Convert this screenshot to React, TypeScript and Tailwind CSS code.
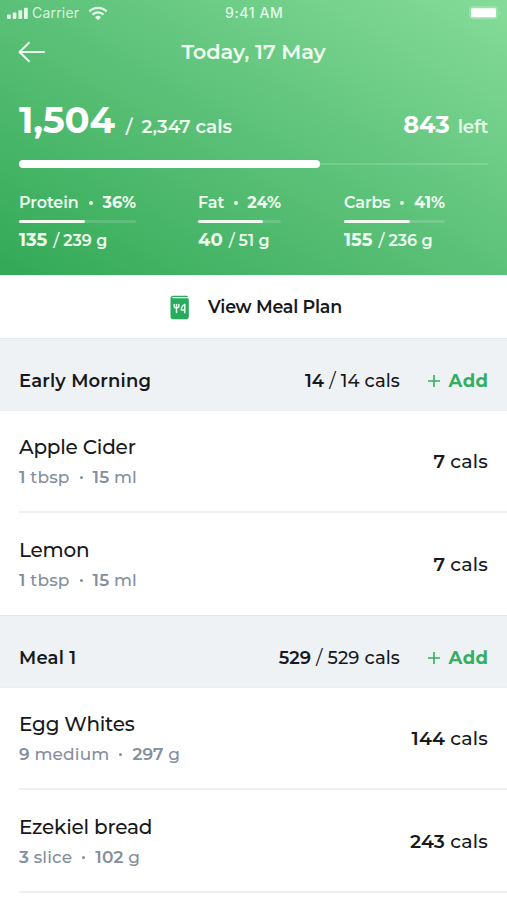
import React from "react";

type Macro = {
  name: string;
  percent: string;
  eaten: string;
  goal: string;
  box: string;
  fill: string;
};

const macros: Macro[] = [
  { name: "Protein", percent: "36%", eaten: "135", goal: "239 g", box: "w-[117px] mr-[62px]", fill: "w-[66px]" },
  { name: "Fat", percent: "24%", eaten: "40", goal: "51 g", box: "w-[83px] mr-[63px]", fill: "w-[65px]" },
  { name: "Carbs", percent: "41%", eaten: "155", goal: "236 g", box: "w-[101px]", fill: "w-[66px]" },
];

type Food = { name: string; qty: string; unit: string; weight: string; weightUnit: string; cals: string };

const morning: Food[] = [
  { name: "Apple Cider", qty: "1", unit: "tbsp", weight: "15", weightUnit: "ml", cals: "7" },
  { name: "Lemon", qty: "1", unit: "tbsp", weight: "15", weightUnit: "ml", cals: "7" },
];
const mealOne: Food[] = [
  { name: "Egg Whites", qty: "9", unit: "medium", weight: "297", weightUnit: "g", cals: "144" },
  { name: "Ezekiel bread", qty: "3", unit: "slice", weight: "102", weightUnit: "g", cals: "243" },
];

function StatusBar() {
  return (
    <div className="relative flex h-[26px] items-center justify-between pl-[7px] pr-[6px] font-['Inter',sans-serif] text-[#e5fae9]">
      <div className="flex items-center">
        <svg width="22" height="13" viewBox="0 0 22 13" fill="currentColor">
          <rect x="0" y="7.5" width="3.7" height="4.5" rx="1" />
          <rect x="5.7" y="5.4" width="3.7" height="6.6" rx="1" />
          <rect x="11.4" y="3.2" width="3.7" height="8.8" rx="1" />
          <rect x="17" y="0.8" width="3.8" height="11.2" rx="1" />
        </svg>
        <span className="ml-[3px] w-[48px] text-[14px] leading-[18px] tracking-[0.2px] opacity-90">Carrier</span>
        <svg className="ml-[8px]" width="20" height="15" viewBox="0 0 20 15" fill="none" stroke="currentColor" strokeWidth="2.3">
          <path d="M1.4 5.4a12.2 12.2 0 0 1 17.2 0" />
          <path d="M4.5 8.6a7.8 7.8 0 0 1 11 0" />
          <path d="M10 14.2 7 11.2a4.3 4.3 0 0 1 6 0Z" fill="currentColor" stroke="none" />
        </svg>
      </div>
      <span className="absolute left-[225px] top-[4px] whitespace-nowrap text-[14px] font-medium leading-[18px] tracking-[0.6px]">9:41 AM</span>
      <svg width="33" height="16" viewBox="0 0 33 16">
        <rect x="1.5" y="1.5" width="28" height="12.5" rx="3" fill="#fff" fillOpacity=".2" stroke="#fff" strokeOpacity=".12" />
        <rect x="3" y="3.3" width="25" height="9" rx="1.3" fill="#fff" />
        <path d="M31 6v4q1.8-.8 1.8-2T31 6Z" fill="#fff" fillOpacity=".2" />
      </svg>
    </div>
  );
}

function MacroCard({ m }: { m: Macro }) {
  return (
    <div className={`${m.box} whitespace-nowrap text-[#effcf0]`}>
      <div className="flex items-center justify-between pt-[1px] text-[16px] leading-[20px]">
        <span className="font-semibold tracking-[-0.1px]">{m.name}</span>
        <span className="size-[4px] rounded-full bg-[#e4f8df]" />
        <span className="font-bold">{m.percent}</span>
      </div>
      <div className="mt-[7px] h-[3px] rounded-full bg-white/15">
        <div className={`h-full rounded-full bg-[#f0fdf0] ${m.fill}`} />
      </div>
      <div className="mt-[5px] flex items-baseline text-[16px] font-semibold leading-[24px]">
        <span className="text-[18px] font-bold">{m.eaten}</span>
        <span className="ml-[6px] mr-[4px] text-[17px] font-medium">/</span>
        <span>{m.goal}</span>
      </div>
    </div>
  );
}

function PlanIcon() {
  return (
    <svg width="20" height="25" viewBox="0 0 20 25">
      <path d="M0.5 3.6Q.5.8 3.4.8h13.2Q18 .8 18 2H3.6Q2.1 2 2.1 2.6t1.5.6h13.8q1.4 0 1.4 1.4v17q0 2.6-2.6 2.600H3.1Q.5 24.200.5 21.600Z" fill="#27ab5c" />
      <g fill="none" stroke="#e3f8e8" strokeLinecap="round" strokeLinejoin="round" strokeWidth="1.5">
        <path d="M4.2 9.6v1.4q0 2 2.3 2t2.3-2V9.6M6.5 9.6v8" />
        <path d="M14.8 17.8V9.3q-3.5 1.8-3.500 5.700h3.500" />
      </g>
    </svg>
  );
}

function SectionHeader({ title, eaten, goal }: { title: string; eaten: string; goal: string }) {
  return (
    <div className="flex h-[73px] items-center border-y border-t-[#e4e8ea] border-b-[#eceff0] bg-[#eef2f5] pl-[19px] pr-[19px] pt-[12px] text-[18px] leading-[24px] text-[#17191c]">
      <span className="flex-1 font-semibold tracking-[0.2px]">{title}</span>
      <span className="flex items-baseline whitespace-nowrap tracking-[0.1px]">
        <span className="font-semibold">{eaten}</span>
        <span className="mx-[5px] text-[19px]">/</span>
        <span className="font-medium">{goal} cals</span>
      </span>
      <span className="ml-[28px] flex w-[60px] items-center justify-between font-bold text-[#35ad62]">
        <svg width="12" height="12" viewBox="0 0 12 12" stroke="currentColor" strokeWidth="1.6">
          <path d="M6 0v12M0 6h12" />
        </svg>
        <span className="-mr-[0.4px] tracking-[0.4px]">Add</span>
      </span>
    </div>
  );
}

function FoodRow({ food, rowClass }: { food: Food; rowClass: string }) {
  return (
    <div className="pl-[19px]">
      <div className={`flex items-center justify-between border-b-2 pr-[19px] ${rowClass}`}>
        <div className="pt-[3px]">
          <div className="text-[20px] font-medium leading-[26px] tracking-[-0.22px] text-[#17191c]">{food.name}</div>
          <div className="mt-[5px] flex items-center text-[17px] font-medium leading-[24px] tracking-[0.12px] text-[#858e9d]">
            <span><span className="font-semibold">{food.qty}</span> {food.unit}</span>
            <span className="mx-[10px] size-[3px] rounded-full bg-[#858e9d]" />
            <span><span className="font-semibold">{food.weight}</span> {food.weightUnit}</span>
          </div>
        </div>
        <div className="pt-[3px] text-[19px] font-medium leading-[24px] tracking-[0.15px] text-[#17191c]">
          <span className="font-semibold">{food.cals}</span> cals
        </div>
      </div>
    </div>
  );
}

export default function App() {
  return (
    <main className="h-[900px] w-[507px] overflow-hidden bg-white font-['Montserrat','Inter',sans-serif]">
      <header className="h-[275px] bg-[linear-gradient(29deg,#32a956_0%,#5cc178_50%,#85dc99_100%)]">
        <StatusBar />
        <div className="grid h-[52px] grid-cols-[100px_1fr_100px] items-center text-[#effcf0]">
          <svg className="ml-[18px]" width="28" height="22" viewBox="0 0 28 22" fill="none" stroke="currentColor" strokeWidth="2" strokeLinecap="round" strokeLinejoin="round">
            <path d="M26 11H1.5M11 1.8 1.500 11l9.500 9.200" />
          </svg>
          <h1 className="whitespace-nowrap text-center text-[21px] font-semibold leading-[26px] tracking-[-0.1px]">Today, 17 May</h1>
        </div>
        <div className="mx-[19px] mt-[17px] flex h-[50px] items-baseline whitespace-nowrap text-white">
          <span className="text-[37px] font-bold leading-[50px] tracking-[-0.2px]">1,504</span>
          <span className="ml-[11px] text-[19px] font-medium">/</span>
          <span className="ml-[9px] text-[18.5px] font-semibold tracking-[-0.1px] text-[#effcf0]">2,347 cals</span>
          <span className="ml-auto text-[24px] font-bold">843</span>
          <span className="ml-[8px] text-[18.5px] font-semibold tracking-[-0.3px] text-[#e5fae9]">left</span>
        </div>
        <div className="mx-[19px] mt-[15px] flex h-[8px] items-center">
          <div className="h-[8px] w-[301px] rounded-full bg-white" />
          <div className="h-[2px] flex-1 bg-white/15" />
        </div>
        <div className="mt-[24px] flex pl-[19px]">
          {macros.map((m) => <MacroCard key={m.name} m={m} />)}
        </div>
      </header>
      <button className="flex h-[63px] w-full items-center pl-[170px] pt-[1px] text-[17.5px] font-semibold text-[#17191c]">
        <PlanIcon />
        <span className="ml-[18px] whitespace-nowrap tracking-[-0.25px]">View Meal Plan</span>
      </button>
      <SectionHeader title="Early Morning" eaten="14" goal="14" />
      <FoodRow food={morning[0]} rowClass="h-[102px] pb-[2px] border-[#edf0f1]" />
      <FoodRow food={morning[1]} rowClass="h-[102px] border-white" />
      <SectionHeader title="Meal 1" eaten="529" goal="529" />
      <FoodRow food={mealOne[0]} rowClass="h-[102px] pb-[2px] border-[#edf0f1]" />
      <FoodRow food={mealOne[1]} rowClass="h-[103px] pb-[1px] border-[#edf0f1]" />
    </main>
  );
}
